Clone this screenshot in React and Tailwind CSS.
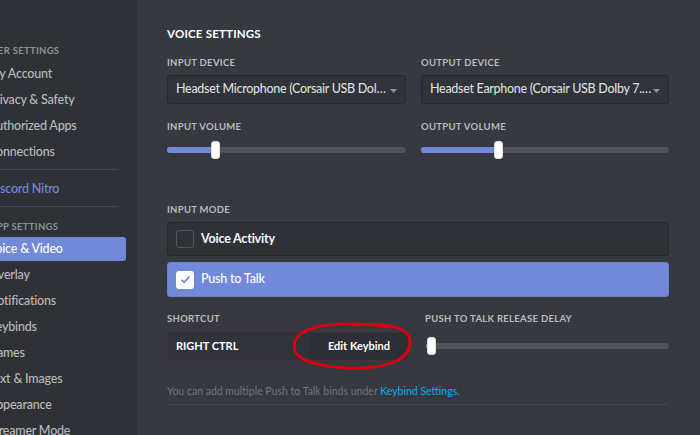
import React from 'react';

const font = { fontFamily: 'Lato, "Noto Sans", sans-serif' };

function SideHeader({ children, className = '' }) {
    return (
        <div className={`h-[14px] leading-[14px] text-[9.5px] font-bold uppercase tracking-[0.3px] text-[#8e9297] whitespace-nowrap ${className}`}>
            {children}
        </div>
    );
}

function SideItem({ label, active, nitro }) {
    return (
        <div
            className={`h-[24px] mb-[2px] w-[126px] rounded-r-[3px] flex items-center overflow-hidden ${active ? 'bg-[#7289da]' : ''}`}
        >
            <span
                className={`ml-[-12px] text-[12.5px] tracking-[-0.2px] font-medium whitespace-nowrap ${active ? 'text-white' : nitro ? 'text-[#7289da]' : 'text-[#b9bbbe]'}`}
            >
                {label}
            </span>
        </div>
    );
}

function Label({ children, className = '' }) {
    return (
        <div className={`h-[14px] pt-px leading-[14px] text-[9.5px] font-bold uppercase tracking-[0.3px] text-[#b9bbbe] whitespace-nowrap ${className}`}>
            {children}
        </div>
    );
}

function Select({ value }) {
    return (
        <div className="mt-[6px] h-[29px] bg-[#303339] border border-[#26282c] rounded-[3px] flex items-center pl-[8px] pr-[8px]">
            <span className="flex-1 min-w-0 truncate text-[12.5px] tracking-[-0.3px] font-medium text-[#dcddde]">{value}</span>
            <svg width="7" height="4" viewBox="0 0 7 4" className="ml-[1px] mt-[3px]">
                <path d="M0 0 L7 0 L3.5 4 Z" fill="#8e9297" />
            </svg>
        </div>
    );
}

function Slider({ pct, className = '' }) {
    return (
        <div className={`relative h-[18px] flex items-center ${className}`}>
            <div className="w-full h-[6px] rounded-full bg-[#4f545c] overflow-hidden">
                <div className="h-full bg-[#7289da]" style={{ width: `${pct}%` }} />
            </div>
            <div
                className="absolute top-0 w-[9px] h-[18px] bg-white rounded-[3px] border border-[#dcddde] shadow"
                style={{ left: `calc(${pct}% - 4px)` }}
            />
        </div>
    );
}

export default function App() {
    return (
        <div className="w-[700px] h-[435px] flex overflow-hidden bg-[#36393f]" style={font}>
            {/* Sidebar */}
            <div className="w-[137px] shrink-0 bg-[#2f3136] pt-[44px] overflow-hidden">
                <SideHeader className="ml-[-15px]">User Settings</SideHeader>
                <div className="mt-[4px]">
                    {['My Account', 'Privacy & Safety', 'Authorized Apps', 'Connections'].map(l => (
                        <SideItem key={l} label={l} />
                    ))}
                </div>
                <div className="mt-[5px] h-px w-[118px] bg-[#43464c]" />
                <div className="mt-[7px]">
                    <SideItem label="Discord Nitro" nitro />
                </div>
                <div className="mt-[5px] h-px w-[118px] bg-[#43464c]" />
                <SideHeader className="mt-[13px] ml-[-10px]">App Settings</SideHeader>
                <div className="mt-[3px]">
                    {['Voice & Video', 'Overlay', 'Notifications', 'Keybinds', 'Games', 'Text & Images', 'Appearance', 'Streamer Mode'].map((l, i) => (
                        <SideItem key={l} label={l} active={i === 0} />
                    ))}
                </div>
            </div>

            {/* Main */}
            <div className="pl-[30px] pt-[26px] w-[532px]">
                <div className="h-[16px] leading-[16px] text-[11.5px] font-bold uppercase tracking-[0.2px] text-white">Voice Settings</div>

                <div className="mt-[13px] grid grid-cols-[239px_248px] gap-x-[15px]">
                    <div>
                        <Label>Input Device</Label>
                        <Select value="Headset Microphone (Corsair USB Dolby 7.1 Audio Adapter)" />
                        <Label className="mt-[15px]">Input Volume</Label>
                        <Slider pct={20} className="mt-[8px]" />
                    </div>
                    <div>
                        <Label>Output Device</Label>
                        <Select value="Headset Earphone (Corsair USB Dolby 7.1 Audio Adapter)" />
                        <Label className="mt-[15px]">Output Volume</Label>
                        <Slider pct={31} className="mt-[8px]" />
                    </div>
                </div>

                <Label className="mt-[43px]">Input Mode</Label>
                <div className="mt-[6px] h-[34px] rounded-[3px] bg-[#2f3136] border border-[#26282c] flex items-center pl-[8px]">
                    <div className="w-[18px] h-[18px] rounded-[3px] border border-[#4f545c]" />
                    <span className="ml-[7px] text-[12.5px] tracking-[-0.2px] font-bold text-[#f6f6f7]">Voice Activity</span>
                </div>
                <div className="mt-[6px] h-[35px] rounded-[3px] bg-[#7289da] border border-[#6a80cf] flex items-center pl-[8px]">
                    <div className="w-[18px] h-[18px] rounded-[3px] bg-white flex items-center justify-center">
                        <svg width="11" height="9" viewBox="0 0 11 9">
                            <path d="M1.5 4.8 L4.2 7.3 L9.5 1.5" fill="none" stroke="#7289da" strokeWidth="1.8" />
                        </svg>
                    </div>
                    <span className="ml-[7px] text-[12.5px] tracking-[-0.2px] font-medium text-white">Push to Talk</span>
                </div>

                <div className="mt-[14px] grid grid-cols-[243px_243px] gap-x-[16px]">
                    <div>
                        <Label>Shortcut</Label>
                        <div className="relative mt-[6px] h-[30px] rounded-[3px] bg-[#303339] border border-[#4e3236] flex items-center pl-[8px] pr-px">
                            <span className="flex-1 text-[11px] font-bold text-white">RIGHT CTRL</span>
                            <div className="w-[98px] h-[26px] rounded-[3px] bg-[#2c2f34] flex items-center justify-center text-[11px] font-bold text-white">
                                Edit Keybind
                            </div>
                            <svg
                                className="absolute left-[124px] top-[-10px] overflow-visible pointer-events-none"
                                width="120"
                                height="48"
                                viewBox="0 0 120 48"
                            >
                                <path
                                    d="M62 3 C92 1, 117 4, 118 19 C119 35, 101 45, 70 46 C40 47, 8 41, 3 29 C-1 16, 10 6, 36 3 C56 1, 78 2, 98 5"
                                    fill="none"
                                    stroke="#e0000d"
                                    strokeWidth="2.8"
                                    strokeLinecap="round"
                                />
                            </svg>
                        </div>
                    </div>
                    <div>
                        <Label className="ml-[-1px]">Push to Talk Release Delay</Label>
                        <div className="mt-[6px] h-[30px] flex items-center">
                            <Slider pct={2} className="w-full" />
                        </div>
                    </div>
                </div>

                <div className="mt-[22px] h-[16px] leading-[16px] text-[10.5px] text-[#72767d]">
                    You can add multiple Push to Talk binds under <span className="text-[#00b0f4]">Keybind Settings</span>.
                </div>
                <div className="mt-[5px] h-px w-[502px] bg-[#42454a]" />
            </div>
        </div>
    );
}
